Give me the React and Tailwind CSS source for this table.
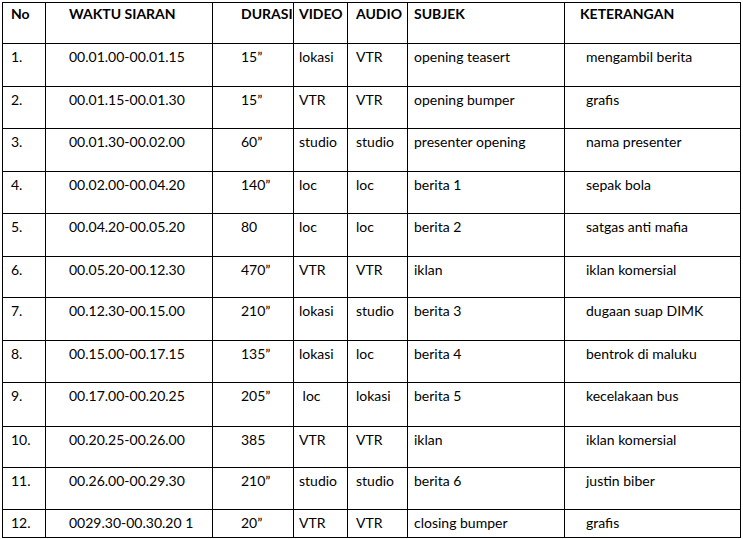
import React from "react";

const rows = [
  ["1.", "00.01.00-00.01.15", "15\u201d", "lokasi", "VTR", "opening teasert", "mengambil berita"],
  ["2.", "00.01.15-00.01.30", "15\u201d", "VTR", "VTR", "opening bumper", "grafis"],
  ["3.", "00.01.30-00.02.00", "60\u201d", "studio", "studio", "presenter opening", "nama presenter"],
  ["4.", "00.02.00-00.04.20", "140\u201d", "loc", "loc", "berita 1", "sepak bola"],
  ["5.", "00.04.20-00.05.20", "80", "loc", "loc", "berita 2", "satgas anti mafia"],
  ["6.", "00.05.20-00.12.30", "470\u201d", "VTR", "VTR", "iklan", "iklan komersial"],
  ["7.", "00.12.30-00.15.00", "210\u201d", "lokasi", "studio", "berita 3", "dugaan suap DIMK"],
  ["8.", "00.15.00-00.17.15", "135\u201d", "lokasi", "loc", "berita 4", "bentrok di maluku"],
  ["9.", "00.17.00-00.20.25", "205\u201d", "\u00a0loc", "lokasi", "berita 5", "kecelakaan bus"],
  ["10.", "00.20.25-00.26.00", "385", "VTR", "VTR", "iklan", "iklan komersial"],
  ["11.", "00.26.00-00.29.30", "210\u201d", "studio", "studio", "berita 6", "justin biber"],
  ["12.", "0029.30-00.30.20 1", "20\u201d", "VTR", "VTR", "closing bumper", "grafis"],
];

const heights = [
  "h-[43px]", "h-[42px]", "h-[43px]", "h-[42px]", "h-[43px]", "h-[41px]",
  "h-[43px]", "h-[42px]", "h-[44px]", "h-[41px]", "h-[42px]", "h-[28px]",
];

const pads = ["pl-[8px]", "pl-[23px]", "pl-[28px]", "pl-[5px]", "pl-[8px]", "pl-[6px]", "pl-[21px]"];
const headPads = ["pl-[8px]", "pl-[23px]", "pl-[28px]", "pl-[5px]", "pl-[8px]", "pl-[6px]", "pl-[15px]"];
const heads = ["No", "WAKTU SIARAN", "DURASI", "VIDEO", "AUDIO", "SUBJEK", "KETERANGAN"];

const App = () => {
  return (
    <div className="w-[743px] h-[539px] bg-white overflow-hidden pt-[2px] pl-[2px] text-black" style={{ fontFamily: "Lato, 'Open Sans', sans-serif" }}>
      <div className="grid grid-cols-[43px_167px_81px_54px_60px_157px_176px] w-[739px] border-l border-t border-black text-[14px] leading-[18px]">
        {heads.map((h, i) => (
          <div key={h} className={"h-[41px] border-r border-b border-black pt-[2px] font-bold whitespace-nowrap " + headPads[i]}>
            {h}
          </div>
        ))}
        {rows.map((r, ri) =>
          r.map((c, ci) => (
            <div key={ri + "-" + ci} className={"border-r border-b border-black pt-[4px] whitespace-nowrap " + heights[ri] + " " + pads[ci]}>
              {c}
            </div>
          ))
        )}
      </div>
    </div>
  );
};

export default App;
